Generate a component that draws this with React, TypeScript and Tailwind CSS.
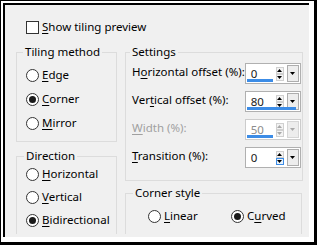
import React from 'react';

const font = { fontFamily: '"Noto Sans", "Open Sans", sans-serif' };

function Mnemonic({ text, u }: { text: string; u: number }) {
  return (
    <span className="whitespace-nowrap">
      {text.slice(0, u)}
      <span className="underline underline-offset-2">{text.charAt(u)}</span>
      {text.slice(u + 1)}
    </span>
  );
}

function Radio({ label, u, checked }: { label: string; u: number; checked?: boolean }) {
  return (
    <div className="flex items-center h-[16px] gap-[3px]">
      <div className="w-[13px] h-[13px] rounded-full border border-[#333333] bg-white flex items-center justify-center">
        {checked && <div className="w-[7px] h-[7px] rounded-full bg-[#1a1a1a]" />}
      </div>
      <Mnemonic text={label} u={u} />
    </div>
  );
}

function Arrow({ up, color }: { up?: boolean; color: string }) {
  return (
    <svg width="5" height="3" viewBox="0 0 5 3">
      <polygon points={up ? '0,3 5,3 2.5,0' : '0,0 5,0 2.5,3'} fill={color} />
    </svg>
  );
}

function SpinInput({
  value,
  bar,
  disabled,
  hoverDown,
}: {
  value: string;
  bar?: number;
  disabled?: boolean;
  hoverDown?: boolean;
}) {
  const c = disabled ? '#a8a8a8' : '#000000';
  return (
    <div
      className={`relative shrink-0 flex items-center h-[21px] w-[56px] border ${
        disabled ? 'border-[#cccccc]' : 'border-[#b0b0b0]'
      } bg-white`}
    >
      <span className={`flex-1 pl-[5px] ${disabled ? 'text-[#8c8c8c]' : 'text-[#1a1a1a]'}`}>{value}</span>
      <div className="flex flex-col w-[8px] mr-[3px]">
        <div className="h-[7px] border border-[#d0d0d0] bg-[#f4f4f4] flex items-center justify-center">
          <Arrow up color={c} />
        </div>
        <div
          className={`h-[7px] border flex items-center justify-center ${
            hoverDown ? 'border-[#3c8ce6] bg-[#e5f1fb]' : 'border-[#d0d0d0] bg-[#f4f4f4]'
          }`}
        >
          <Arrow color={c} />
        </div>
      </div>
      <div
        className={`w-[12px] h-[17px] mr-[1px] border ${
          disabled ? 'border-[#d6d6d6]' : 'border-[#adadad]'
        } bg-[#ededed] flex items-center justify-center`}
      >
        <Arrow color={c} />
      </div>
      {bar !== undefined && (
        <div className="absolute left-[1px] bottom-[1px] h-[3px] bg-[#3c8ce6]" style={{ width: bar }} />
      )}
    </div>
  );
}

function Row({
  label,
  u,
  disabled,
  children,
}: {
  label: string;
  u: number;
  disabled?: boolean;
  children: React.ReactNode;
}) {
  return (
    <div className="flex items-center justify-between h-[21px]">
      <span className={`-mt-[3px] ${disabled ? 'text-[#a0a0a0]' : ''}`}>
        <Mnemonic text={label} u={u} />
      </span>
      {children}
    </div>
  );
}

export default function App() {
  return (
    <div
      className="w-[317px] h-[245px] bg-white border-t border-l border-r-[3px] border-b-[3px] border-black pt-[2px] pl-[2px] pr-[5px] pb-[5px] text-[11.5px] leading-[16px] text-black"
      style={font}
    >
      <div className="w-full h-full bg-[#f0f0f0] border-t-2 border-l-2 border-black pt-[14px] pl-[11px] pr-0">
        {/* Show tiling preview */}
        <div className="flex items-center h-[16px] gap-[3px] pl-[10px]">
          <div className="w-[13px] h-[13px] border border-[#333333] bg-white" />
          <Mnemonic text="Show tiling preview" u={0} />
        </div>

        <div className="flex gap-[8px] mt-[9px]">
          {/* Left column */}
          <div className="flex flex-col gap-[6px] w-[101px]">
            <fieldset className="h-[98px] border border-[#dcdcdc]">
              <legend className="ml-[6px] px-[2px]">Tiling method</legend>
              <div className="flex flex-col gap-[8px] pt-[7px] pl-[9px]">
                <Radio label="Edge" u={0} />
                <Radio label="Corner" u={0} checked />
                <Radio label="Mirror" u={0} />
              </div>
            </fieldset>
            <fieldset className="h-[86px] border border-[#dcdcdc] border-b-0">
              <legend className="ml-[7px] px-[2px]">Direction</legend>
              <div className="flex flex-col gap-[7px] pt-[2px] pl-[9px]">
                <Radio label="Horizontal" u={0} />
                <Radio label="Vertical" u={0} />
                <Radio label="Bidirectional" u={0} checked />
              </div>
            </fieldset>
          </div>

          {/* Right column */}
          <div className="flex flex-col gap-[4px] w-[177px]">
            <fieldset className="h-[137px] border border-[#dcdcdc]">
              <legend className="ml-[4px] px-[2px]">Settings</legend>
              <div className="flex flex-col gap-[7px] pt-[3px] pl-[6px] pr-[1px]">
                <Row label="Horizontal offset (%):" u={1}>
                  <SpinInput value="0" bar={26} />
                </Row>
                <Row label="Vertical offset (%):" u={3}>
                  <SpinInput value="80" bar={49} />
                </Row>
                <Row label="Width (%):" u={0} disabled>
                  <SpinInput value="50" bar={26} disabled />
                </Row>
                <Row label="Transition (%):" u={0}>
                  <SpinInput value="0" hoverDown />
                </Row>
              </div>
            </fieldset>
            <fieldset className="h-[49px] border border-[#dcdcdc] border-b-0">
              <legend className="ml-[7px] px-[2px]">Corner style</legend>
              <div className="flex pt-[7px] pl-[22px]">
                <div className="w-[83px]">
                  <Radio label="Linear" u={0} />
                </div>
                <Radio label="Curved" u={1} checked />
              </div>
            </fieldset>
          </div>
        </div>
      </div>
    </div>
  );
}
